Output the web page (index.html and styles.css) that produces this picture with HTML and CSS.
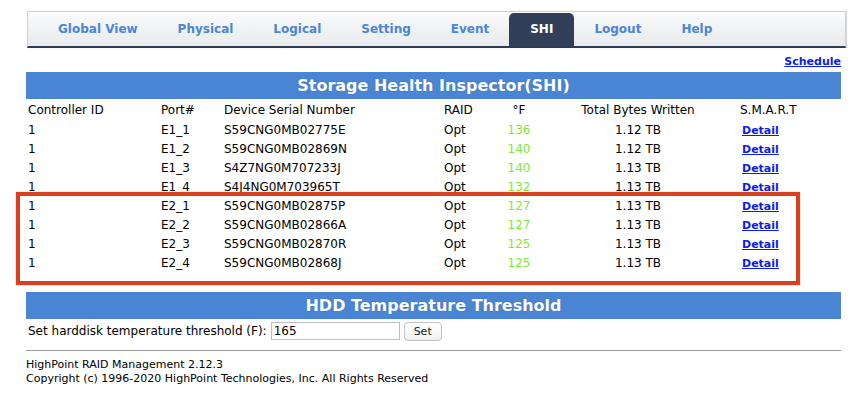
FILE: index.html
```html
<!DOCTYPE html>
<html lang="en">
<head>
    <meta charset="utf-8">
    <title>HighPoint RAID Management</title>
    <link rel="stylesheet" href="styles.css">
</head>
<body>
<div class="page">
    <div class="topLine"></div>
    <div class="nav">
        <a class="nav__tab">Global View</a>
        <a class="nav__tab">Physical</a>
        <a class="nav__tab">Logical</a>
        <a class="nav__tab">Setting</a>
        <a class="nav__tab">Event</a>
        <a class="nav__tab nav__tab_active">SHI</a>
        <a class="nav__tab">Logout</a>
        <a class="nav__tab">Help</a>
    </div>
    <div class="scheduleLine"><a href="#" class="link">Schedule</a></div>

    <div class="bar">Storage Health Inspector(SHI)</div>
    <table class="shiTable">
        <colgroup>
            <col style="width:135px">
            <col style="width:63px">
            <col style="width:220px">
            <col style="width:46px">
            <col style="width:58px">
            <col style="width:180px">
            <col>
        </colgroup>
        <tr class="shiTable__head">
            <td>Controller ID</td><td>Port#</td><td>Device Serial Number</td><td>RAID</td>
            <td class="center">°F</td><td class="center">Total Bytes Written</td><td class="smart">S.M.A.R.T</td>
        </tr>
        <tr><td>1</td><td>E1_1</td><td>S59CNG0MB02775E</td><td>Opt</td><td class="center temp">136</td><td class="center">1.12 TB</td><td class="smart"><a href="#" class="link detail">Detail</a></td></tr>
        <tr><td>1</td><td>E1_2</td><td>S59CNG0MB02869N</td><td>Opt</td><td class="center temp">140</td><td class="center">1.12 TB</td><td class="smart"><a href="#" class="link detail">Detail</a></td></tr>
        <tr><td>1</td><td>E1_3</td><td>S4Z7NG0M707233J</td><td>Opt</td><td class="center temp">140</td><td class="center">1.13 TB</td><td class="smart"><a href="#" class="link detail">Detail</a></td></tr>
        <tr><td>1</td><td>E1_4</td><td>S4J4NG0M703965T</td><td>Opt</td><td class="center temp">132</td><td class="center">1.13 TB</td><td class="smart"><a href="#" class="link detail">Detail</a></td></tr>
        <tr><td>1</td><td>E2_1</td><td>S59CNG0MB02875P</td><td>Opt</td><td class="center temp">127</td><td class="center">1.13 TB</td><td class="smart"><a href="#" class="link detail">Detail</a></td></tr>
        <tr><td>1</td><td>E2_2</td><td>S59CNG0MB02866A</td><td>Opt</td><td class="center temp">127</td><td class="center">1.13 TB</td><td class="smart"><a href="#" class="link detail">Detail</a></td></tr>
        <tr><td>1</td><td>E2_3</td><td>S59CNG0MB02870R</td><td>Opt</td><td class="center temp">125</td><td class="center">1.13 TB</td><td class="smart"><a href="#" class="link detail">Detail</a></td></tr>
        <tr><td>1</td><td>E2_4</td><td>S59CNG0MB02868J</td><td>Opt</td><td class="center temp">125</td><td class="center">1.13 TB</td><td class="smart"><a href="#" class="link detail">Detail</a></td></tr>
    </table>

    <div class="bar bar_second">HDD Temperature Threshold</div>
    <div class="thresholdRow">
        <label for="threshold">Set harddisk temperature threshold (F):</label>
        <input id="threshold" class="input" value="165">
        <button class="button">Set</button>
    </div>
    <div class="divider"></div>
    <div class="footer">
        HighPoint RAID Management 2.12.3<br>
        Copyright (c) 1996-2020 HighPoint Technologies, Inc. All Rights Reserved
    </div>

    <div class="highlight"></div>
</div>
</body>
</html>
```

FILE: styles.css
```css
body {
    font-family: 'DejaVu Sans', Verdana, sans-serif;
    margin: 0;
    padding: 0;
    color: #000;
    background: #fff;
}

.page {
    position: relative;
    width: 815px;
    margin-left: 26px;
}

.topLine {
    height: 11px;
}

.nav {
    display: flex;
    width: 807px;
    height: 34px;
    margin-left: 1px;
    padding-left: 10px;
    border: 1px solid #cfd1d5;
    border-bottom: 2px solid #2f3b52;
    background: linear-gradient(#fbfbfc, #eef0f2 60%, #e8eaed);
    box-shadow: 1px 0 1px #d8d8d8;
}

.nav__tab {
    padding: 0 20px;
    line-height: 34px;
    font-size: 12px;
    font-weight: bold;
    color: #4a86d4;
    cursor: pointer;
}

.nav__tab_active {
    margin-top: 1px;
    padding: 0 21px;
    line-height: 33px;
    background: #323f58;
    color: #fff;
    border-radius: 5px 5px 0 0;
}

.scheduleLine {
    text-align: right;
    margin: 7px 0 3px;
    line-height: 14px;
    font-size: 11px;
}

.link {
    color: #0a1cf0;
    font-weight: bold;
    text-decoration: underline;
}

.bar {
    height: 27px;
    line-height: 27px;
    background: #4a85d4;
    color: #fff;
    text-align: center;
    font-size: 16px;
    font-weight: bold;
    text-shadow: 0 0 1px rgba(0, 0, 0, 0.25);
}

.bar_second {
    margin-top: 20px;
}

.shiTable {
    width: 815px;
    border-collapse: collapse;
    table-layout: fixed;
    font-size: 12px;
}

.shiTable td {
    padding: 0;
    height: 19px;
    white-space: nowrap;
}

.shiTable td:first-child {
    padding-left: 2px;
}

.shiTable__head td {
    height: 21px;
}

.center {
    text-align: center;
}

.temp {
    color: #7ee83a;
}

.smart {
    padding-left: 12px !important;
}

.detail {
    font-size: 11px;
    margin-left: 2px;
}

.thresholdRow {
    display: flex;
    align-items: center;
    gap: 4px;
    height: 24px;
    padding-left: 2px;
    font-size: 12px;
}

.input {
    box-sizing: border-box;
    width: 129px;
    height: 18px;
    padding: 0 2px;
    border: 1px solid #bdbdbd;
    font-family: inherit;
    font-size: 12px;
    outline: none;
}

.button {
    box-sizing: border-box;
    width: 38px;
    height: 19px;
    padding: 0;
    border: 1px solid #c3c3c3;
    border-radius: 4px;
    background: linear-gradient(#ffffff, #f1f1f1);
    font-family: inherit;
    font-size: 11px;
    color: #222;
}

.divider {
    height: 1px;
    margin: 7px 0 7px;
    background: #9a9a9a;
}

.footer {
    font-size: 11px;
    line-height: 14px;
}

.highlight {
    position: absolute;
    left: -10px;
    top: 192px;
    width: 784px;
    height: 93px;
    box-sizing: border-box;
    border: 4px solid #d8401e;
    box-shadow: 0 0 1px #e07a60;
}
```
